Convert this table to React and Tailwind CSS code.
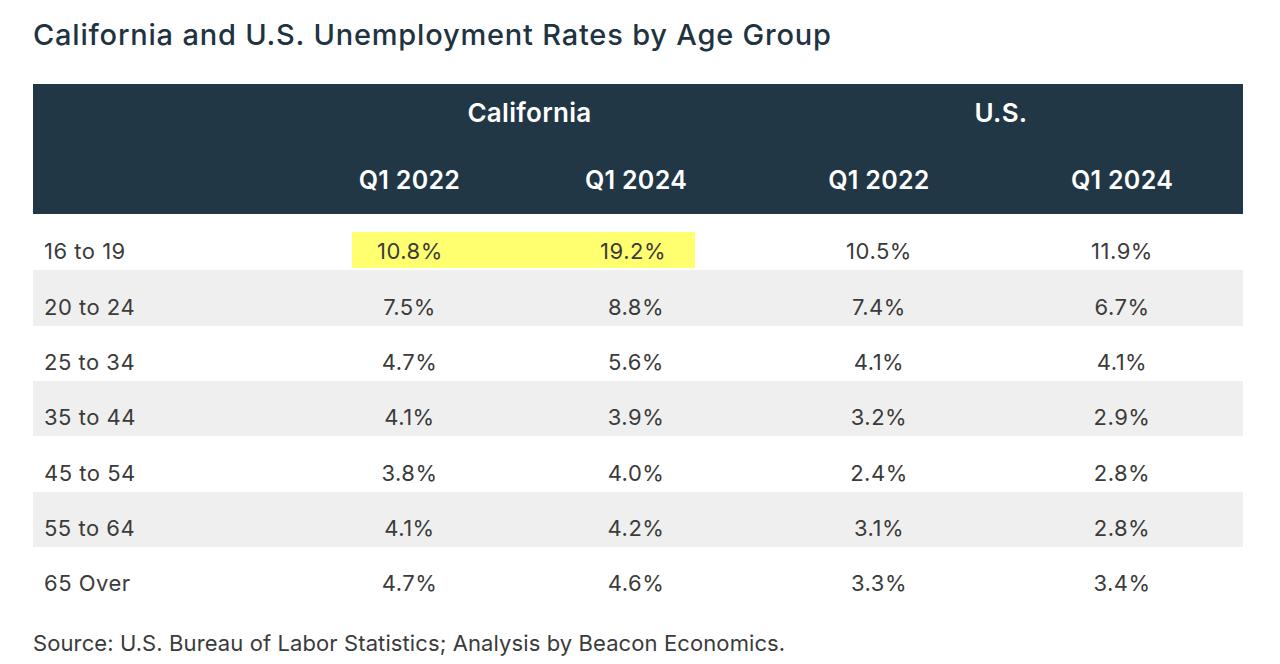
import React from 'react'

const rows = [
  ['16 to 19', '10.8%', '19.2%', '10.5%', '11.9%'],
  ['20 to 24', '7.5%', '8.8%', '7.4%', '6.7%'],
  ['25 to 34', '4.7%', '5.6%', '4.1%', '4.1%'],
  ['35 to 44', '4.1%', '3.9%', '3.2%', '2.9%'],
  ['45 to 54', '3.8%', '4.0%', '2.4%', '2.8%'],
  ['55 to 64', '4.1%', '4.2%', '3.1%', '2.8%'],
  ['65 Over', '4.7%', '4.6%', '3.3%', '3.4%'],
]

// row heights add up to the 388px body of the reference
const heights = ['h-[56px]', 'h-[56px]', 'h-[55px]', 'h-[55px]', 'h-[56px]', 'h-[55px]', 'h-[55px]']

const cols = 'grid grid-cols-[264px_225px_228px_258px_1fr]'

const Row = ({ row, index }) => {
  const [label, ca22, ca24, us22, us24] = row
  const shaded = index % 2 === 1
  return (
    <div className={`${cols} ${heights[index]} pt-[18px] pb-[2px] ${shaded ? 'bg-[#efefef]' : 'bg-white'}`}>
      <div className="flex items-center pl-[11px] pt-[2px]">{label}</div>
      {index === 0 ? (
        <div className="col-span-2 mx-[55px] flex items-center justify-between bg-[#ffff70] pl-[25px] pr-[29px] pt-[2px]">
          <span>{ca22}</span>
          <span>{ca24}</span>
        </div>
      ) : (
        <>
          <div className="flex items-center justify-center pt-[2px]">{ca22}</div>
          <div className="flex items-center justify-center pt-[2px]">{ca24}</div>
        </>
      )}
      <div className="flex items-center justify-center pt-[2px]">{us22}</div>
      <div className="flex items-center justify-center pr-[7px] pt-[2px]">{us24}</div>
    </div>
  )
}

export default function App() {
  return (
    <div className="h-[664px] w-[1280px] bg-white px-[33px] pt-[16px] font-['Inter',sans-serif] text-[#3b3b3b]">
      <h1 className="h-[38px] text-[29px] font-medium leading-[38px] tracking-[0.8px] text-[#1f3341]">
        California and U.S. Unemployment Rates by Age Group
      </h1>

      <div className="mt-[30px] w-[1210px] text-[22px] tracking-[0.5px]">
        <div className="bg-[#213745] font-semibold text-white">
          <div className={`${cols} h-[60px] items-end pb-[12px] text-[26px] tracking-[0.3px]`}>
            <div />
            <div className="col-span-2 pl-[12px] text-center">California</div>
            <div className="col-span-2 pl-[9px] text-center">U.S.</div>
          </div>
          <div className={`${cols} h-[70px] items-center pt-[4px] text-[25px] tracking-[0.3px]`}>
            <div />
            <div className="text-center">Q1 2022</div>
            <div className="text-center">Q1 2024</div>
            <div className="text-center">Q1 2022</div>
            <div className="pr-[7px] text-center">Q1 2024</div>
          </div>
        </div>

        {rows.map((row, i) => (
          <Row key={row[0]} row={row} index={i} />
        ))}
      </div>

      <p className="mt-[25px] text-[22px] tracking-[0.1px] text-[#3b3b3b]">
        Source: U.S. Bureau of Labor Statistics; Analysis by Beacon Economics.
      </p>
    </div>
  )
}
